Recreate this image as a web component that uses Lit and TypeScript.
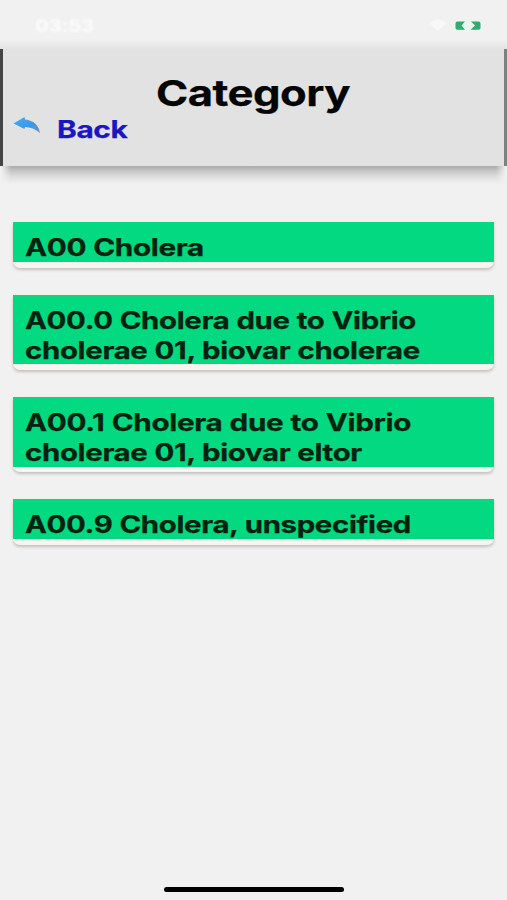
import { LitElement, html, svg, css } from "lit";
import { customElement, property } from "lit/decorators.js";

/** One line of wide lettering, fitted to a given width. */
@customElement("wide-text")
class WideText extends LitElement {
  @property() text = "";
  @property({ type: Number }) width = 100;
  @property({ type: Number }) size = 24;
  @property({ type: Number }) line = 30;
  @property({ type: Number }) base = 23;
  @property({ type: Number }) weight = 700;

  static styles = css`
    :host { display: block; }
    svg { display: block; overflow: visible; }
    text {
      font-family: Inter, "Liberation Sans", sans-serif;
      fill: currentColor;
      stroke: currentColor;
      stroke-width: 0.25px;
      letter-spacing: -0.012em;
      word-spacing: 0.015em;
    }
  `;

  render() {
    return html`<svg width=${this.width} height=${this.line}>
      ${svg`<text x="0" y=${this.base} font-size=${this.size} font-weight=${this.weight}
        textLength=${this.width} lengthAdjust="spacingAndGlyphs">${this.text}</text>`}
    </svg>`;
  }
}

type Line = { text: string; width: number };

const items: Line[][] = [
  [{ text: "A00 Cholera", width: 179 }],
  [
    { text: "A00.0 Cholera due to Vibrio", width: 391 },
    { text: "cholerae 01, biovar cholerae", width: 395 },
  ],
  [
    { text: "A00.1 Cholera due to Vibrio", width: 386 },
    { text: "cholerae 01, biovar eltor", width: 337 },
  ],
  [{ text: "A00.9 Cholera, unspecified", width: 386 }],
];

@customElement("app-root")
class AppRoot extends LitElement {
  static styles = css`
    :host {
      display: flex;
      flex-direction: column;
      box-sizing: border-box;
      width: 100%;
      height: 900px;
      overflow: hidden;
      background: #f1f1f1;
      font-family: Inter, "Liberation Sans", sans-serif;
    }
    .status {
      flex: none;
      display: flex;
      justify-content: space-between;
      align-items: flex-start;
      box-sizing: border-box;
      height: 49px;
      padding: 16px 25px 0 35px;
      color: #fafafa;
      background: linear-gradient(#f1f1f1 39px, #e8e8e8 46px, #e4e4e4);
    }
    .time { filter: blur(1px); }
    .signals { display: flex; gap: 6px; padding-top: 3px; }
    .signals svg { display: block; }
    .header {
      flex: none;
      box-sizing: border-box;
      height: 117px;
      padding: 20px 0 0;
      background: #e2e2e2;
      border-left: 3px solid #444;
      border-right: 3px solid #808080;
    }
    .shade {
      flex: none;
      height: 18px;
      margin: 0 1px;
      background: linear-gradient(#aaa, #c4c4c4 25%, #dedede 60%, #f1f1f100);
      mask-image: linear-gradient(to right, transparent, #000 10px, #000 calc(100% - 10px), transparent);
    }
    .title { display: flex; justify-content: center; padding-right: 2px; color: #050505; }
    .back { display: flex; align-items: flex-start; gap: 16px; padding-left: 10px; color: #1c16c2; }
    .back svg { display: block; margin-top: 2px; }
    .list {
      flex: 1;
      display: flex;
      flex-direction: column;
      gap: 27px;
      padding: 38px 13px 0;
    }
    .card {
      flex: none;
      background: #f7f5f0;
      padding-bottom: 5.5px;
      border-radius: 2px 2px 7px 7px;
      box-shadow: 0 2px 3px rgba(90, 70, 70, 0.28), 0 -2px 3px #f5f0ea;
    }
    .fill {
      box-sizing: border-box;
      height: 40px;
      padding: 11px 12px 0;
      background: #03d981;
      color: #03220f;
    }
    .tall { height: 69.8px; }
    .home {
      flex: none;
      align-self: center;
      width: 180px;
      height: 5px;
      margin: 0 0 8.5px;
      border-radius: 3px;
      background: #000;
    }
  `;

  render() {
    return html`
      <div class="status">
        <wide-text class="time" text="03:53" width="59" size="18" line="20" base="16"></wide-text>
        <div class="signals">
          <svg width="20" height="13" viewBox="0 0 20 13">
            <path d="M1 4Q10-3 19 4L10 12Z" fill="#f8f8f8" />
          </svg>
          <svg width="28" height="13" viewBox="0 0 28 13">
            <rect x="0" y="0" width="28" height="13" rx="3" fill="#e9f5ee" />
            <path d="M3.500 2.500H11L7.500 6.500L11 10.800H3.500Q1.500 10.800 1.500 9V4.500Q1.500 2.500 3.500 2.500Z" fill="#36a870" />
            <path d="M17 2.500H24.500Q26.500 2.500 26.500 4.500V9Q26.500 10.800 24.500 10.800H16.500L21 6.500Z" fill="#36a870" />
          </svg>
        </div>
      </div>
      <div class="header">
        <div class="title">
          <wide-text text="Category" width="194" size="36" line="46" base="36.5"></wide-text>
        </div>
        <div class="back">
          <svg width="28" height="20" viewBox="0 0 28 20">
            <defs>
              <linearGradient id="arrow" x1="0" y1="0" x2="1" y2="1">
                <stop offset="0" stop-color="#45aaf5" />
                <stop offset="0.6" stop-color="#3b98e8" />
                <stop offset="1" stop-color="#8095a8" />
              </linearGradient>
            </defs>
            <path d="M0.5 6.5L11.500 0L12 2.500Q25 4 27 16Q20 10 12 10L11.500 12Z" fill="url(#arrow)" />
          </svg>
          <wide-text text="Back" width="70.5" size="24" line="30" base="23.4"></wide-text>
        </div>
      </div>
      <div class="shade"></div>
      <div class="list">
        ${items.map(
          (lines) => html`<div class="card">
            <div class="fill ${lines.length > 1 ? "tall" : ""}">
              ${lines.map((l) => html`<wide-text text=${l.text} width=${l.width}></wide-text>`)}
            </div>
          </div>`
        )}
      </div>
      <div class="home"></div>
    `;
  }
}
